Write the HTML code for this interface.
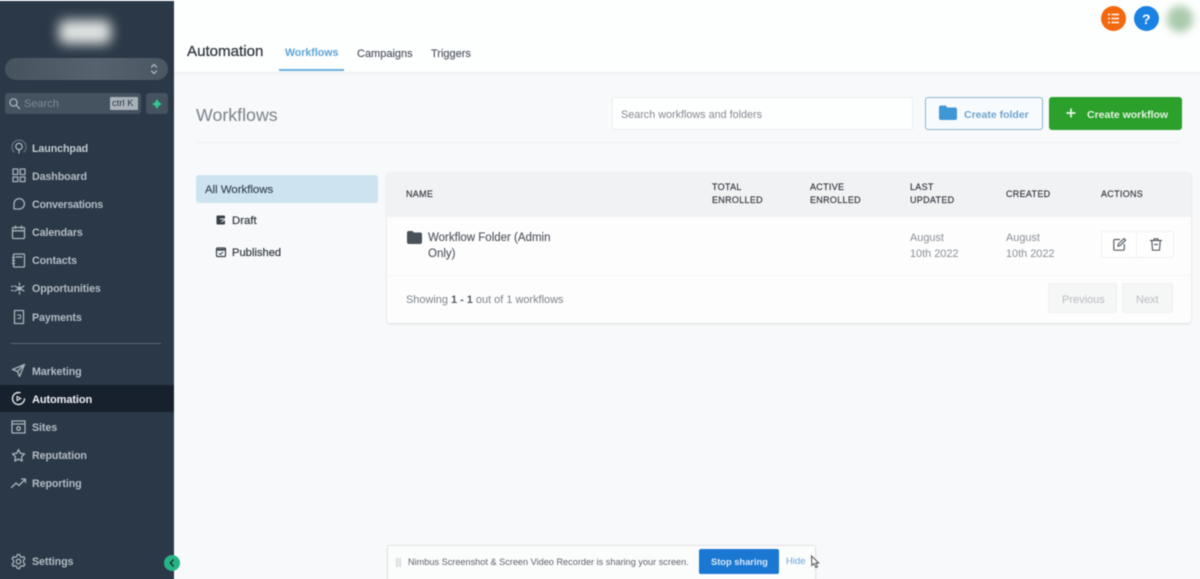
<!DOCTYPE html>
<html><head><meta charset="utf-8"><style>
html,body{margin:0;padding:0;width:1200px;height:579px;overflow:hidden;background:#f7f9fa;font-family:"Liberation Sans",sans-serif}
#c{position:relative;width:1200px;height:579px;overflow:hidden;contain:paint}
#r{position:absolute;left:-4px;top:-4px;width:1208px;height:587px;overflow:hidden;filter:blur(.5px)}
#w{position:absolute;left:4px;top:4px;width:1200px;height:579px}
#r div,#r svg,#r span.t{position:absolute}
.t{white-space:nowrap;line-height:16px}
.n{left:32px;font-size:10.7px;font-weight:bold;color:#b3bcc6;letter-spacing:-.1px}
.h{font-size:9px;color:#30363e;letter-spacing:.3px;line-height:13px;font-weight:normal;-webkit-text-stroke:.15px #30363e}
.g{fill:none;stroke:#a9b3bd;stroke-width:1.3;stroke-linecap:round;stroke-linejoin:round}
</style></head><body><div id="c"><div id="r"><div id="w">
<div style="left:-4px;top:-4px;width:1208px;height:76px;background:#fdfefe;border-bottom:1px solid #e4e7e9;box-sizing:content-box"></div>
<div style="left:174px;top:72px;width:1030px;height:3px;background:linear-gradient(#eceef0,#f7f9fa)"></div>
<!-- sidebar -->
<div style="left:-4px;top:1px;width:178px;height:582px;background:#2b3847"></div>
<div style="left:59px;top:20px;width:52px;height:24px;background:#dfe4e2;border-radius:6px;filter:blur(6px)"></div>
<div style="left:5px;top:58px;width:163px;height:22px;border-radius:11px;background:linear-gradient(90deg,#46535f,#56626e 55%,#4a5763)"></div>
<svg style="left:148px;top:60px" width="12" height="18" viewBox="0 0 12 18" class="g"><path d="M3.500 7 6 4.500 8.500 7M3.500 11 6 13.500 8.500 11"/></svg>
<div style="left:5px;top:93px;width:136px;height:21px;background:#45525f;border-radius:3px"></div>
<svg style="left:8px;top:97px" width="13" height="13" viewBox="0 0 13 13" class="g"><circle cx="5.500" cy="5.500" r="3.600"/><path d="M8.300 8.300 11.500 11.500"/></svg>
<span class="t" style="left:24px;top:96px;font-size:11px;color:#7f8b96">Search</span>
<div style="left:110px;top:97px;width:28px;height:13px;background:#a9b2b9;border-radius:1px"></div>
<span class="t" style="left:112px;top:96px;font-size:9.500px;color:#2b3847">ctrl K</span>
<div style="left:146px;top:93px;width:22px;height:21px;background:#45525f;border-radius:3px"></div>
<svg style="left:151px;top:98px" width="12" height="12" viewBox="0 0 12 12"><path d="M6 1 7.800 4.200 11 6 7.800 7.800 6 11 4.200 7.800 1 6 4.200 4.200Z" fill="#34c88e"/></svg>

<span class="t n" style="top:141px;color:#c2cad1">Launchpad</span>
<svg style="left:10px;top:139px" width="18" height="17" viewBox="0 0 18 17" class="g" stroke-width="1"><path d="M4 13A7 7 0 1 1 14 13" opacity=".45"/><circle cx="9" cy="7.500" r="3.200"/><path d="M9 10.700V14"/></svg>
<span class="t n" style="top:169px">Dashboard</span>
<svg style="left:12px;top:168px" width="14" height="15" viewBox="0 0 14 15" class="g"><rect x="1" y="1" width="4.800" height="5.500"/><rect x="8.200" y="1" width="4.800" height="5.500"/><rect x="1" y="9" width="4.800" height="4.600"/><rect x="8.200" y="9" width="4.800" height="4.600"/></svg>
<span class="t n" style="top:197px;letter-spacing:-.25px">Conversations</span>
<svg style="left:11px;top:196px" width="15" height="15" viewBox="0 0 15 15" class="g"><path d="M3 12.500V8A5.200 5.200 0 1 1 7.500 13H3Z"/></svg>
<span class="t n" style="top:225px">Calendars</span>
<svg style="left:11px;top:225px" width="15" height="15" viewBox="0 0 15 15" class="g"><rect x="1.500" y="2.500" width="12" height="11" rx="1"/><path d="M1.500 5.800H13.500M4.500 1V3.500M10.500 1V3.500"/></svg>
<span class="t n" style="top:253px">Contacts</span>
<svg style="left:11px;top:253px" width="15" height="15" viewBox="0 0 15 15" class="g"><rect x="2.500" y="1" width="11" height="13" rx="1"/><path d="M5 4H11M1.500 4.500H3.500M1.500 7.500H3.500M1.500 10.500H3.500"/></svg>
<span class="t n" style="top:281px">Opportunities</span>
<svg style="left:10px;top:281px" width="17" height="15" viewBox="0 0 17 15" class="g"><circle cx="9.500" cy="7.500" r="1.600" fill="#a9b3bd"/><path d="M9.500 2V4M9.500 11V13M5 5 7 6.300M14 5 12 6.300M5 10 7 8.700M14 10 12 8.700M1.500 5.500H3M1.500 9.500H3"/></svg>
<span class="t n" style="top:310px">Payments</span>
<svg style="left:12px;top:309px" width="14" height="16" viewBox="0 0 14 16" class="g"><path d="M2.500 1.500H11.500V14.500H2.500Z"/><path d="M5.500 9.500H8.500V6H5.500" stroke-width="1"/></svg>
<div style="left:11px;top:343px;width:150px;height:1px;background:#5a6672"></div>
<span class="t n" style="top:364px">Marketing</span>
<svg style="left:11px;top:363px" width="15" height="15" viewBox="0 0 15 15" class="g"><path d="M13.500 1.500 1.500 6.500 6.500 8.500 8.500 13.500ZM6.500 8.500 13.500 1.500"/></svg>
<div style="left:-4px;top:385px;width:178px;height:27px;background:#17212d"></div>
<span class="t n" style="top:392px;color:#eef1f3;font-size:11px">Automation</span>
<svg style="left:11px;top:391px" width="15" height="15" viewBox="0 0 15 15" fill="none" stroke="#e4e8ea" stroke-width="1.400" stroke-linecap="round"><path d="M9 1.700A6 6 0 1 0 13.500 8"/><path d="M6 5.500 9.800 7.500 6 9.500Z" stroke-width="1"/></svg>
<span class="t n" style="top:420px">Sites</span>
<svg style="left:11px;top:420px" width="15" height="14" viewBox="0 0 15 14" class="g"><rect x="1" y="1" width="13" height="12"/><path d="M1 4H14"/><circle cx="7.500" cy="8.500" r="1.800"/></svg>
<span class="t n" style="top:448px">Reputation</span>
<svg style="left:11px;top:448px" width="15" height="15" viewBox="0 0 15 15" class="g"><path d="M7.500 1.500 9.300 5.300 13.500 5.900 10.500 8.800 11.200 13 7.500 11 3.800 13 4.500 8.800 1.500 5.900 5.700 5.300Z"/></svg>
<span class="t n" style="top:476px">Reporting</span>
<svg style="left:10px;top:477px" width="17" height="13" viewBox="0 0 17 13" class="g" stroke-width="1.100"><path d="M1.500 10.500 6 6 9 8.500 15 2.500M11.500 2H15.500V5.500"/></svg>
<span class="t n" style="top:554px">Settings</span>
<svg style="left:10px;top:553px" width="17" height="17" viewBox="0 0 17 17" class="g"><circle cx="8.500" cy="8.500" r="2.300"/><path d="M7.300 1.500H9.700L10.200 3.400 11.900 4.300 13.700 3.700 14.900 5.800 13.500 7.200V9.800L14.900 11.200 13.700 13.300 11.900 12.700 10.200 13.600 9.700 15.500H7.300L6.800 13.600 5.100 12.700 3.300 13.300 2.100 11.200 3.500 9.800V7.200L2.100 5.800 3.300 3.700 5.100 4.300 6.800 3.400Z"/></svg>
<div style="left:164px;top:555px;width:16px;height:16px;border-radius:50%;background:#25b585"></div>
<svg style="left:167px;top:558px" width="10" height="10" viewBox="0 0 10 10" fill="none" stroke="#1d3d3b" stroke-width="1.700"><path d="M6.500 1.500 3.500 5 6.500 8.500"/></svg>

<!-- header -->
<span class="t" style="left:187px;top:44px;font-size:15.100px;color:#333a42;-webkit-text-stroke:.3px #333a42">Automation</span>
<span class="t" style="left:285px;top:45px;font-size:10.600px;font-weight:bold;color:#5da5d6">Workflows</span>
<div style="left:279px;top:69px;width:65px;height:1.500px;background:#6aaedb"></div>
<span class="t" style="left:357px;top:46px;font-size:11px;color:#565d66;-webkit-text-stroke:.2px #565d66">Campaigns</span>
<span class="t" style="left:431px;top:46px;font-size:11px;color:#565d66;-webkit-text-stroke:.2px #565d66">Triggers</span>
<div style="left:1101px;top:6px;width:25px;height:25px;border-radius:50%;background:#f3690f"></div>
<svg style="left:1107px;top:12px" width="13" height="13" viewBox="0 0 13 13" stroke="#fff" stroke-width="1.600"><path d="M1 2.500H3M4.500 2.500H12M1 6.500H3M4.500 6.500H12M1 10.500H3M4.500 10.500H12"/></svg>
<div style="left:1134px;top:6px;width:25px;height:25px;border-radius:50%;background:#1a82e2"></div>
<span class="t" style="left:1142px;top:11px;font-size:14px;font-weight:bold;color:#fff">?</span>
<div style="left:1167px;top:6px;width:26px;height:26px;border-radius:50%;background:#a9cbac;filter:blur(4px)"></div>

<!-- title row -->
<span class="t" style="left:196px;top:105px;font-size:17.800px;line-height:20px;color:#7d838a">Workflows</span>
<div style="left:612px;top:97px;width:301px;height:33px;box-sizing:border-box;background:#fdfefe;border:1px solid #eceff0;border-radius:2px"></div>
<span class="t" style="left:621px;top:107px;font-size:10.800px;color:#858b92">Search workflows and folders</span>
<div style="left:925px;top:97px;width:118px;height:33px;box-sizing:border-box;background:#f8fbfd;border:1px solid #8fb6cf;border-radius:3px"></div>
<svg style="left:938px;top:104px" width="20" height="18" viewBox="0 0 20 18"><path d="M1 3.500Q1 1.500 3 1.500H7.500L9.500 3.500H17Q19 3.500 19 5.500V14Q19 16 17 16H3Q1 16 1 14Z" fill="#3f97d6"/></svg>
<span class="t" style="left:964px;top:107px;font-size:10.500px;font-weight:bold;color:#6ea4cc">Create folder</span>
<div style="left:1049px;top:97px;width:133px;height:33px;background:#2ba02b;border-radius:3px"></div>
<svg style="left:1065px;top:107px" width="12" height="12" viewBox="0 0 12 12" stroke="#eaf6ea" stroke-width="1.700"><path d="M6 1.500V10.500M1.500 6H10.500"/></svg>
<span class="t" style="left:1087px;top:107px;font-size:10.500px;font-weight:bold;color:#e4f3e4">Create workflow</span>
<div style="left:196px;top:142px;width:985px;height:1px;background:#eef0f1"></div>

<!-- left nav -->
<div style="left:196px;top:175px;width:182px;height:28px;background:#cde4f0;border-radius:3px"></div>
<span class="t" style="left:205px;top:182px;font-size:11.400px;color:#3c4c5c;-webkit-text-stroke:.2px #3c4c5c">All Workflows</span>
<svg style="left:215px;top:214px" width="12" height="12" viewBox="0 0 12 12"><rect x="1.500" y="1.500" width="8.500" height="9" rx="1" fill="#3a4048"/><path d="M5 5H10.500M6.500 8 10.500 5.500" stroke="#f7f9fa" stroke-width="1"/></svg>
<span class="t" style="left:232px;top:213px;font-size:11.400px;color:#3c4148;-webkit-text-stroke:.25px #3c4148">Draft</span>
<svg style="left:215px;top:246px" width="12" height="12" viewBox="0 0 12 12" fill="none" stroke="#3a4048"><rect x="1.500" y="2" width="9" height="8.500" rx="1" stroke-width="1.200"/><path d="M1.500 3.800H10.500" stroke-width="1.800"/><path d="M4 7.300 5.500 8.500 8 6" stroke-width="1"/></svg>
<span class="t" style="left:232px;top:245px;font-size:11.200px;color:#3c4148;-webkit-text-stroke:.25px #3c4148">Published</span>

<!-- table -->
<div style="left:387px;top:172px;width:804px;height:151px;background:#fdfdfd;border-radius:3px;box-shadow:0 1px 2px rgba(0,0,0,.13)"></div>
<div style="left:387px;top:172px;width:804px;height:45px;background:#f1f2f3;border-radius:3px 3px 0 0"></div>
<div style="left:387px;top:275px;width:804px;height:1px;background:#f3f4f5"></div>
<span class="t h" style="left:406px;top:188px">NAME</span>
<span class="t h" style="left:712px;top:181px">TOTAL<br>ENROLLED</span>
<span class="t h" style="left:810px;top:181px">ACTIVE<br>ENROLLED</span>
<span class="t h" style="left:910px;top:181px">LAST<br>UPDATED</span>
<span class="t h" style="left:1006px;top:188px">CREATED</span>
<span class="t h" style="left:1101px;top:188px">ACTIONS</span>
<svg style="left:406px;top:230px" width="17" height="15" viewBox="0 0 17 15"><path d="M1 3Q1 1 3 1H6.500L8 2.500H14.500Q16 2.500 16 4.500V12Q16 14 14 14H3Q1 14 1 12Z" fill="#4b5159"/></svg>
<span class="t" style="left:428px;top:231px;font-size:11.500px;line-height:15.500px;color:#555b63;-webkit-text-stroke:.15px #555b63">Workflow Folder (Admin<br>Only)</span>
<span class="t" style="left:910px;top:231px;font-size:10.900px;line-height:15.500px;color:#8a8f96">August<br>10th 2022</span>
<span class="t" style="left:1006px;top:231px;font-size:10.900px;line-height:15.500px;color:#8a8f96">August<br>10th 2022</span>
<div style="left:1101px;top:231px;width:73px;height:27px;box-sizing:border-box;background:#fefefe;border:1px solid #eff0f1;border-radius:2px"></div>
<div style="left:1136px;top:232px;width:1px;height:25px;background:#f0f1f2"></div>
<svg style="left:1112px;top:237px" width="15" height="15" viewBox="0 0 15 15" fill="none" stroke="#5a6068" stroke-width="1.200" stroke-linecap="round" stroke-linejoin="round"><path d="M7.500 2.500H3Q1.800 2.500 1.800 3.700V12Q1.800 13.200 3 13.200H11Q12.300 13.200 12.300 12V7.500"/><path d="M5.800 9.200 6.300 7 12 1.600 13.600 3.200 8 8.700Z"/></svg>
<svg style="left:1149px;top:237px" width="14" height="15" viewBox="0 0 14 15" fill="none" stroke="#5a6068" stroke-width="1.200" stroke-linecap="round" stroke-linejoin="round"><path d="M1.500 3.500H12.500M5 3.500V1.800H9V3.500M2.800 3.500 3.500 13.200H10.500L11.200 3.500M5.500 7.500 8.500 7.500"/></svg>
<span class="t" style="left:406px;top:292px;font-size:10.950px;color:#7d838a">Showing <b style="color:#555b63">1 - 1</b> out of 1 workflows</span>
<div style="left:1048px;top:283px;width:69px;height:30px;background:#f5f6f6;border:1px solid #f0f1f1;box-sizing:border-box;border-radius:2px"></div>
<span class="t" style="left:1062px;top:292px;font-size:11px;color:#b9bcbf">Previous</span>
<div style="left:1122px;top:283px;width:51px;height:30px;background:#f5f6f6;border:1px solid #f0f1f1;box-sizing:border-box;border-radius:2px"></div>
<span class="t" style="left:1136px;top:292px;font-size:11px;color:#b9bcbf">Next</span>

<!-- share bar -->
<div style="left:388px;top:546px;width:427px;height:37px;background:#fbfcfc;box-shadow:0 0 2px rgba(0,0,0,.25)"></div>
<div style="left:396px;top:558px;width:2px;height:9px;background:#d8dadc"></div>
<div style="left:399px;top:558px;width:2px;height:9px;background:#d8dadc"></div>
<span class="t" style="left:408px;top:554px;font-size:9.160px;color:#5d636b">Nimbus Screenshot &amp; Screen Video Recorder is sharing your screen.</span>
<div style="left:699px;top:549px;width:80px;height:25px;background:#1a78d2;border-radius:2px"></div>
<span class="t" style="left:711px;top:554px;font-size:9.300px;font-weight:bold;color:#d8e9f8">Stop sharing</span>
<span class="t" style="left:786px;top:554px;font-size:9.500px;color:#6aa5dc">Hide</span>
<svg style="left:810px;top:555px" width="10" height="14" viewBox="0 0 10 14"><path d="M1.500 1 1.800 10.500 4 8.500 5.800 12.500 7.500 11.800 5.800 8H8.800Z" fill="#fff" stroke="#555" stroke-width="1"/></svg>
</div></div></div></body></html>
